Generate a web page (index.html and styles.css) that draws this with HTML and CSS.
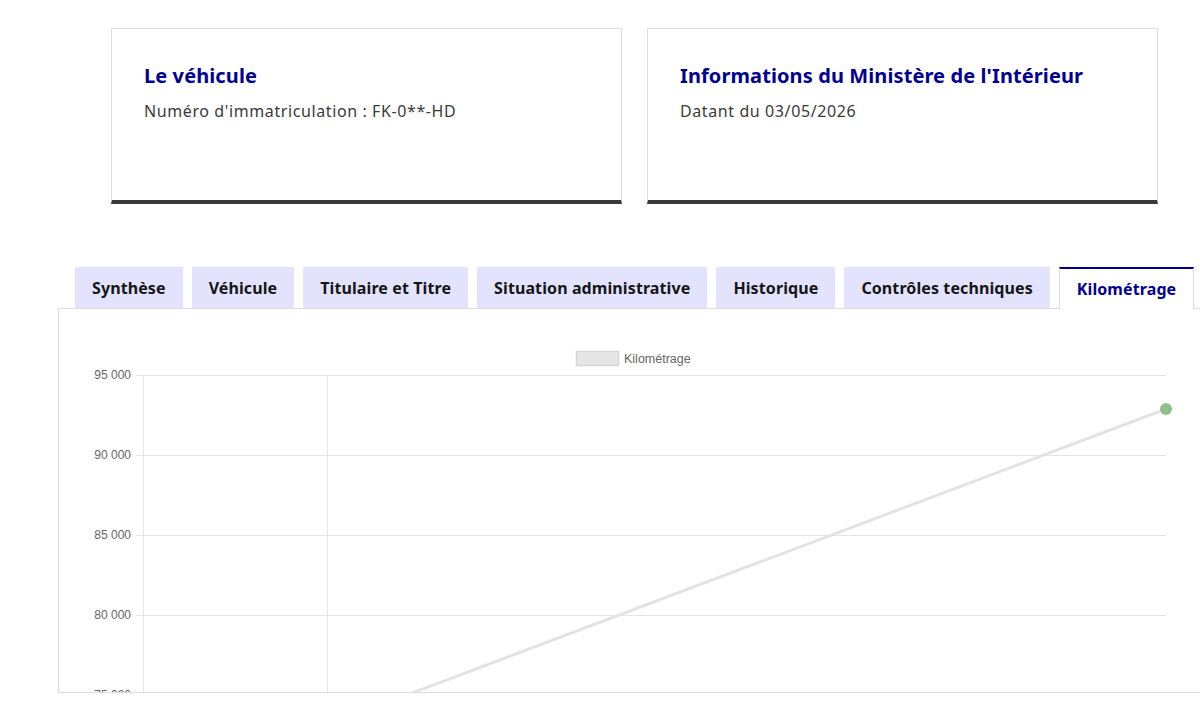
FILE: index.html
```html
<!DOCTYPE html>
<html lang="fr">
<head>
    <meta charset="UTF-8">
    <meta name="viewport" content="width=device-width, initial-scale=1.0">
    <title>Historique du véhicule - Kilométrage</title>
    <link rel="stylesheet" href="styles.css">
</head>
<body>

<div class="page">
    <div class="cards">
        <div class="card">
            <h3 class="card-title">Le véhicule</h3>
            <p class="card-desc">Numéro d'immatriculation : FK-0**-HD</p>
        </div>
        <div class="card">
            <h3 class="card-title">Informations du Ministère de l'Intérieur</h3>
            <p class="card-desc">Datant du 03/05/2026</p>
        </div>
    </div>

    <div class="tabs">
        <ul class="tabs-list">
            <li><button class="tab">Synthèse</button></li>
            <li><button class="tab">Véhicule</button></li>
            <li><button class="tab">Titulaire et Titre</button></li>
            <li><button class="tab">Situation administrative</button></li>
            <li><button class="tab">Historique</button></li>
            <li><button class="tab">Contrôles techniques</button></li>
            <li><button class="tab tab-active">Kilométrage</button></li>
        </ul>

        <div class="panel">
            <svg class="chart" viewBox="59 309 1141 383" width="1141" height="383">
                <!-- legende -->
                <rect x="576.5" y="351.5" width="42" height="14" fill="#e6e6e6" stroke="#d6d6d6" stroke-width="1.5"/>
                <text x="624" y="363" class="legend">Kilométrage</text>

                <!-- grille -->
                <g stroke="#e4e4e4" stroke-width="1">
                    <line x1="136" y1="375.5" x2="1166" y2="375.5"/>
                    <line x1="136" y1="455.5" x2="1166" y2="455.5"/>
                    <line x1="136" y1="535.5" x2="1166" y2="535.5"/>
                    <line x1="136" y1="615.5" x2="1166" y2="615.5"/>
                    <line x1="136" y1="695.5" x2="1166" y2="695.5"/>
                    <line x1="143.5" y1="375" x2="143.5" y2="700"/>
                    <line x1="327.5" y1="375" x2="327.5" y2="700"/>
                </g>

                <g class="ticks">
                    <text x="131" y="379">95 000</text>
                    <text x="131" y="459">90 000</text>
                    <text x="131" y="539">85 000</text>
                    <text x="131" y="619">80 000</text>
                    <text x="131" y="699">75 000</text>
                </g>

                <!-- donnees -->
                <line x1="390" y1="701.4" x2="1166" y2="409" stroke="#e3e3e3" stroke-width="3"/>
                <circle cx="1166" cy="409" r="6" fill="#8dc08d"/>
            </svg>
        </div>
    </div>
</div>

</body>
</html>
```

FILE: styles.css
```css
body {
    margin: 0;
    background-color: #fff;
    font-family: 'Noto Sans', Arial, sans-serif;
    color: #3a3a3a;
    overflow: hidden;
}
.page {
    width: 1200px;
    height: 720px;
    overflow: hidden;
}
.cards {
    display: flex;
    gap: 25px;
    padding: 28px 0 0 111px;
}
.card {
    width: 445px;
    height: 111px;
    padding: 33px 32px 27px;
    border: 1px solid #dddddd;
    border-bottom: 4px solid #3a3a3a;
    background-color: #fff;
}
.card-title {
    margin: 0 0 9px;
    font-size: 20px;
    line-height: 28px;
    font-weight: 700;
    color: #000091;
    letter-spacing: 0.1px;
}
.card-desc {
    margin: 0;
    font-size: 16px;
    line-height: 24px;
    letter-spacing: 0.6px;
    color: #3a3a3a;
}
.tabs {
    margin: 63px 0 0 58px;
    width: 1160px;
}
.tabs-list {
    display: flex;
    gap: 9px;
    margin: 0;
    padding: 0 0 0 17px;
    list-style: none;
}
.tab {
    height: 41px;
    padding: 0 17px;
    border: none;
    background-color: #e3e3fd;
    font-family: 'Noto Sans', Arial, sans-serif;
    font-size: 16px;
    font-weight: 700;
    letter-spacing: 0.1px;
    color: #161616;
    cursor: pointer;
}
.tab-active {
    background-color: #fff;
    color: #000091;
    border-top: 2px solid #000091;
    border-left: 1px solid #dddddd;
    border-right: 1px solid #dddddd;
    height: 42px;
    margin-bottom: -1px;
    position: relative;
}
.panel {
    height: 383px;
    border: 1px solid #dddddd;
    overflow: hidden;
}
.chart {
    display: block;
}
.legend {
    font-family: 'Liberation Sans', Arial, sans-serif;
    font-size: 12.5px;
    fill: #666;
}
.ticks text {
    font-family: 'Liberation Sans', Arial, sans-serif;
    font-size: 12px;
    fill: #666;
    text-anchor: end;
}
```
